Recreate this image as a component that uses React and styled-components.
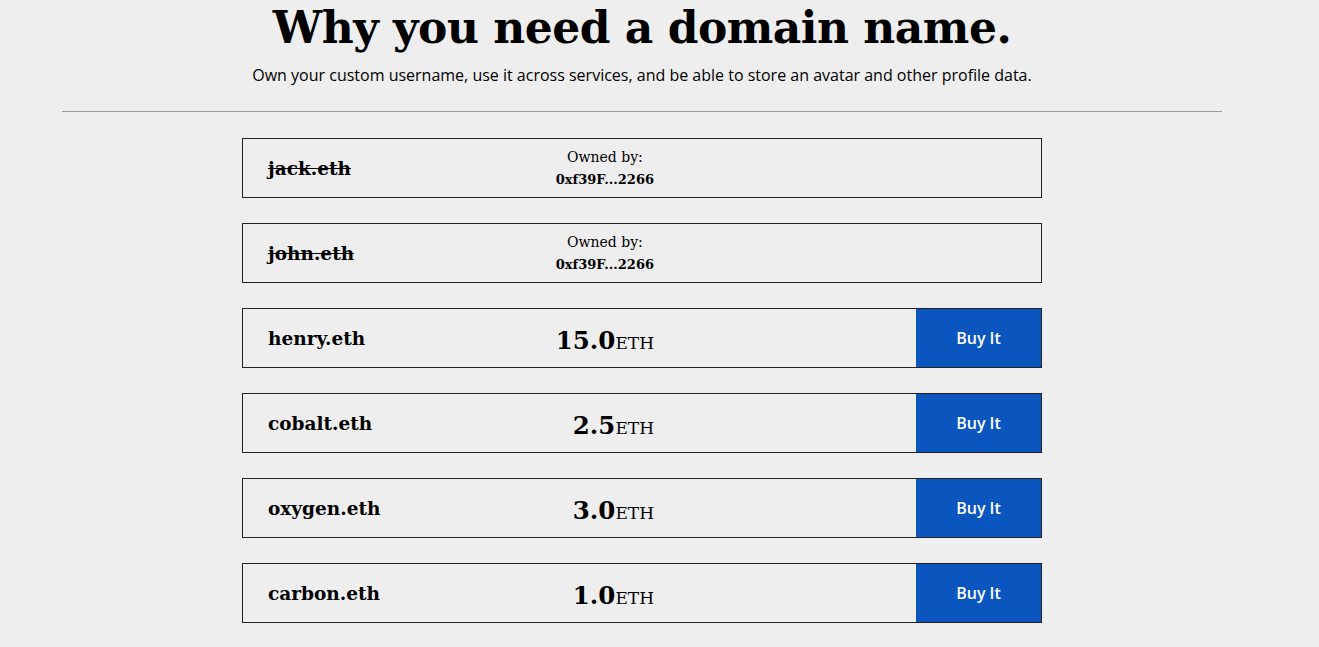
import React from "react";
import styled, { createGlobalStyle } from "styled-components";

const Global = createGlobalStyle`
  html, body { margin: 0; padding: 0; background: #eeeeee; }
  body { font-family: "Open Sans", sans-serif; color: #000; }
`;

const Page = styled.div`
  width: 1160px;
  margin-left: 62px;
  display: flex;
  flex-direction: column;
  align-items: center;
`;

const Title = styled.h1`
  margin: 0;
  padding-top: 4px;
  font-family: "DejaVu Serif", serif;
  font-weight: 700;
  font-size: 44px;
  line-height: 48px;
  letter-spacing: -0.5px;
  text-align: center;
`;

const Subtitle = styled.p`
  margin: 12px 0 0;
  font-family: "Open Sans", sans-serif;
  font-size: 16px;
  line-height: 22px;
  text-align: center;
`;

const Rule = styled.hr`
  align-self: stretch;
  margin: 25px 0 26px;
  border: 0;
  border-top: 1px solid #9b9b9b;
  height: 0;
`;

const List = styled.div`
  display: flex;
  flex-direction: column;
  gap: 25px;
  width: 800px;
`;

const Card = styled.div`
  box-sizing: border-box;
  height: 60px;
  border: 1px solid #222;
  display: flex;
  align-items: stretch;
`;

const Name = styled.div`
  width: 288px;
  padding-left: 25px;
  display: flex;
  align-items: center;
  font-family: "DejaVu Serif", serif;
  font-weight: 700;
  font-size: 18.5px;
  text-decoration: ${(p) => (p.$taken ? "line-through" : "none")};
`;

const Middle = styled.div`
  width: 98px;
  display: flex;
  justify-content: flex-end;
  align-items: center;
`;

const Owner = styled.div`
  display: flex;
  flex-direction: column;
  align-items: center;
  font-family: "DejaVu Serif", serif;
  white-space: nowrap;
  padding-top: 1px;
`;

const OwnerLabel = styled.span`
  font-size: 14px;
  font-weight: 300;
  line-height: 22px;
`;

const OwnerAddr = styled.span`
  font-size: 13px;
  font-weight: 700;
  line-height: 23px;
`;

const Price = styled.div`
  font-family: "DejaVu Serif", serif;
  white-space: nowrap;
  padding-top: 4px;
`;

const Amount = styled.span`
  font-weight: 700;
  font-size: 24.5px;
`;

const Unit = styled.span`
  font-size: 17px;
`;

const Spacer = styled.div`
  flex: 1;
`;

const BuyButton = styled.button`
  width: 125px;
  border: 0;
  margin: 0;
  background: #0b55bf;
  color: #fff;
  font-family: "Open Sans", sans-serif;
  font-weight: 600;
  font-size: 16px;
  cursor: pointer;
`;

const domains = [
  { name: "jack.eth", owner: "0xf39F...2266" },
  { name: "john.eth", owner: "0xf39F...2266" },
  { name: "henry.eth", price: "15.0" },
  { name: "cobalt.eth", price: "2.5" },
  { name: "oxygen.eth", price: "3.0" },
  { name: "carbon.eth", price: "1.0" },
];

export default function App() {
  return (
    <>
      <Global />
      <Page>
        <Title>Why you need a domain name.</Title>
        <Subtitle>
          Own your custom username, use it across services, and be able to store an avatar and other profile data.
        </Subtitle>
        <Rule />
        <List>
          {domains.map((d) => (
            <Card key={d.name}>
              <Name $taken={!!d.owner}>{d.name}</Name>
              <Middle>
                {d.owner ? (
                  <Owner>
                    <OwnerLabel>Owned by:</OwnerLabel>
                    <OwnerAddr>{d.owner}</OwnerAddr>
                  </Owner>
                ) : (
                  <Price>
                    <Amount>{d.price}</Amount>
                    <Unit>ETH</Unit>
                  </Price>
                )}
              </Middle>
              <Spacer />
              {!d.owner && <BuyButton>Buy It</BuyButton>}
            </Card>
          ))}
        </List>
      </Page>
    </>
  );
}
